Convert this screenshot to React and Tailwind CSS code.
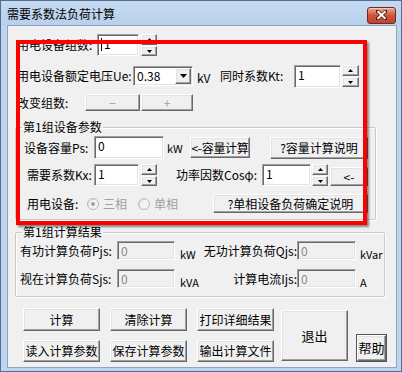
import React from "react";

const bevelBtn =
  "bg-[#f0f0f0] border border-t-white border-l-white border-r-[#696969] border-b-[#696969] shadow-[inset_-1px_-1px_0_#a0a0a0,inset_1px_1px_0_#e3e3e3] flex items-center justify-center whitespace-nowrap overflow-hidden";

const sunken =
  "border border-t-[#a0a0a0] border-l-[#a0a0a0] border-r-white border-b-white shadow-[inset_1px_1px_0_#696969,inset_-1px_-1px_0_#e3e3e3]";

function Arrow({ up }) {
  return (
    <svg width="5" height="3" viewBox="0 0 5 3">
      <path d={up ? "M2.5 0 L5 3 L0 3 Z" : "M0 0 L5 0 L2.5 3 Z"} fill="#000" />
    </svg>
  );
}

function Spin({ h = 22, w = 16 }) {
  const half = Math.floor(h / 2);
  return (
    <div className="flex flex-col gap-[1px]">
      <div className={bevelBtn} style={{ width: w, height: half }}>
        <Arrow up />
      </div>
      <div className={bevelBtn} style={{ width: w, height: h - half - 1 }}>
        <Arrow />
      </div>
    </div>
  );
}

function Field({ value, w, h = 22, disabled = false, caret = false }) {
  return (
    <div
      className={`${sunken} ${disabled ? "bg-[#f0f0f0] text-[#8a8a8a]" : "bg-white text-black"} pl-[3px] pt-[2px] flex items-start`}
      style={{ width: w, height: h }}
    >
      {caret && <span className="w-[1px] h-[13px] bg-black mr-[2px] mt-[1px]" />}
      <span className="leading-[14px]">{value}</span>
    </div>
  );
}

function Button({ children, w, h, className = "text-black" }) {
  return (
    <div className={`${bevelBtn} ${className}`} style={{ width: w, height: h }}>
      {children}
    </div>
  );
}

function Radio({ checked, label }) {
  return (
    <div className="flex items-center gap-[4px] text-[#a0a0a0]">
      <span className="w-[12px] h-[12px] rounded-full border border-[#b8b8b8] bg-[#f4f4f4] flex items-center justify-center shadow-[inset_1px_1px_0_#dcdcdc]">
        {checked && <span className="w-[4px] h-[4px] rounded-full bg-[#a0a0a0]" />}
      </span>
      <span>{label}</span>
    </div>
  );
}

export default function App() {
  return (
    <div className="w-[402px] h-[372px] bg-[#bfd4ed] border border-[#4f6f98] flex flex-col font-['Noto_Sans_CJK_SC',sans-serif] text-[12px] leading-[14px] text-black overflow-hidden">
      {/* title bar */}
      <div className="h-[24px] shrink-0 flex items-center justify-between pl-[6px] pr-[5px] bg-gradient-to-b from-[#c6daf1] to-[#b9d0eb]">
        <span className="text-[12px] text-black mt-[2px]">需要系数法负荷计算</span>
        <div className="w-[29px] h-[17px] mt-[4px] rounded-[3px] border border-[#6e2a1f] bg-gradient-to-b from-[#e8a493] via-[#d0533c] to-[#c1432c] flex items-center justify-center shadow-[inset_0_1px_0_#f5c8bc]">
          <svg width="11" height="10" viewBox="0 0 11 10">
            <path d="M1 1 L10 9 M10 1 L1 9" stroke="#4a1a12" strokeWidth="3.4" strokeLinecap="square" />
            <path d="M1.5 1.2 L9.5 8.8 M9.5 1.2 L1.5 8.8" stroke="#fff" strokeWidth="2" />
          </svg>
        </div>
      </div>

      {/* client */}
      <div className="relative flex-1 ml-[6px] mr-[4px] mb-[3px] bg-[#f0f0f0] border border-[#8ea6c4]">
        {/* row 1 */}
        <div className="flex items-center h-[22px] mt-[8px] ml-[9px]">
          <span className="w-[80px]">用电设备组数:</span>
          <Field value="1" w={42} caret />
          <div className="ml-[2px]">
            <Spin h={22} />
          </div>
        </div>

        {/* row 2 */}
        <div className="flex items-center h-[24px] mt-[8px] ml-[9px]">
          <span className="w-[116px]">用电设备额定电压Ue:</span>
          <div className={`${sunken} bg-white w-[60px] h-[20px] flex items-center justify-between pl-[3px] pr-[1px]`}>
            <span>0.38</span>
            <div className={`${bevelBtn} w-[16px] h-[16px]`}>
              <svg width="7" height="4" viewBox="0 0 7 4">
                <path d="M0 0 L7 0 L3.5 4 Z" fill="#000" />
              </svg>
            </div>
          </div>
          <span className="w-[27px] pl-[4px] mt-[4px]">kV</span>
          <span className="w-[74px]">同时系数Kt:</span>
          <Field value="1" w={47} h={23} />
          <div className="ml-[1px]">
            <Spin h={22} w={17} />
          </div>
        </div>

        {/* row 3 */}
        <div className="flex items-center h-[17px] mt-[6px] ml-[9px]">
          <span className="w-[68px]">改变组数:</span>
          <Button w={55} h={17} className="text-[#a0a0a0]">−</Button>
          <Button w={52} h={17} className="ml-[1px] text-[#a0a0a0]">+</Button>
        </div>

        {/* group 1 */}
        <fieldset className="mt-[9px] ml-[7px] w-[361px] h-[100px] border border-[#c9c9c9] rounded-[2px] shadow-[inset_1px_1px_0_#fff,1px_1px_0_#fff]">
          <legend className="ml-[6px] px-[1px] leading-[14px]">第1组设备参数</legend>
          <div className="flex items-center h-[23px] mt-[2px] ml-[8px]">
            <span className="w-[70px]">设备容量Ps:</span>
            <Field value="0" w={70} h={23} />
            <span className="w-[26px] pl-[3px] text-[11px]">kW</span>
            <Button w={60} h={21} className="text-black tracking-[-0.3px]">&lt;-容量计算</Button>
            <Button w={98} h={22} className="ml-[20px] text-black">?容量计算说明</Button>
          </div>
          <div className="flex items-center h-[22px] mt-[5px] ml-[11px]">
            <span className="w-[67px]">需要系数Kx:</span>
            <Field value="1" w={45} h={22} />
            <div className="ml-[2px]">
              <Spin h={22} />
            </div>
            <span className="w-[86px] ml-[19px]">功率因数Cosφ:</span>
            <Field value="1" w={49} h={22} />
            <div className="ml-[1px]">
              <Spin h={22} />
            </div>
            <Button w={38} h={19} className="ml-[2px] self-end text-black">&lt;-</Button>
          </div>
          <div className="flex items-center h-[19px] mt-[8px] ml-[11px]">
            <span className="w-[60px]">用电设备:</span>
            <div className="w-[51px]">
              <Radio checked label="三相" />
            </div>
            <div className="w-[75px]">
              <Radio label="单相" />
            </div>
            <Button w={155} h={19}>?单相设备负荷确定说明</Button>
          </div>
        </fieldset>

        {/* group 2 */}
        <fieldset className="mt-[5px] ml-[7px] w-[370px] h-[72px] border border-[#c9c9c9] rounded-[2px] shadow-[inset_1px_1px_0_#fff,1px_1px_0_#fff]">
          <legend className="ml-[6px] px-[1px] leading-[14px]">第1组计算结果</legend>
          <div className="flex items-center h-[19px] mt-[2px] ml-[4px]">
            <span className="w-[97px]">有功计算负荷Pjs:</span>
            <Field value="0" w={58} h={19} disabled />
            <span className="w-[25px] pl-[5px] mt-[6px] text-[11px]">kW</span>
            <span className="w-[97px] text-right">无功计算负荷Qjs:</span>
            <Field value="0" w={59} h={19} disabled />
            <span className="pl-[4px] mt-[6px] text-[11px]">kVar</span>
          </div>
          <div className="flex items-center h-[19px] mt-[9px] ml-[4px]">
            <span className="w-[97px]">视在计算负荷Sjs:</span>
            <Field value="0" w={58} h={19} disabled />
            <span className="w-[25px] pl-[5px] mt-[6px] text-[11px]">kVA</span>
            <span className="w-[97px] text-right">计算电流Ijs:</span>
            <Field value="0" w={59} h={19} disabled />
            <span className="pl-[4px] mt-[6px] text-[11px]">A</span>
          </div>
        </fieldset>

        {/* buttons */}
        <div className="flex items-start mt-[11px] ml-[15px]">
          <div className="grid grid-cols-[77px_77px_77px] gap-x-[10px] gap-y-[9px]">
            <Button w={77} h={23}>计算</Button>
            <Button w={77} h={23}>清除计算</Button>
            <Button w={77} h={23}>打印详细结果</Button>
            <Button w={77} h={22}>读入计算参数</Button>
            <Button w={77} h={22}>保存计算参数</Button>
            <Button w={77} h={22}>输出计算文件</Button>
          </div>
          <Button w={67} h={51} className="ml-[7px] mt-[2px] text-[13px] text-black">退出</Button>
          <div className="ml-[8px] mt-[26px] w-[31px] h-[28px] border border-[#555] flex">
            <Button w={29} h={26} className="text-[13px] text-black">帮助</Button>
          </div>
        </div>

        {/* red annotation box */}
        <div className="absolute left-[8px] top-[14px] w-[351px] h-[185px] border-4 border-[#ff0000] shadow-[2px_2px_2px_rgba(0,0,0,0.45)] pointer-events-none" />
      </div>
    </div>
  );
}
